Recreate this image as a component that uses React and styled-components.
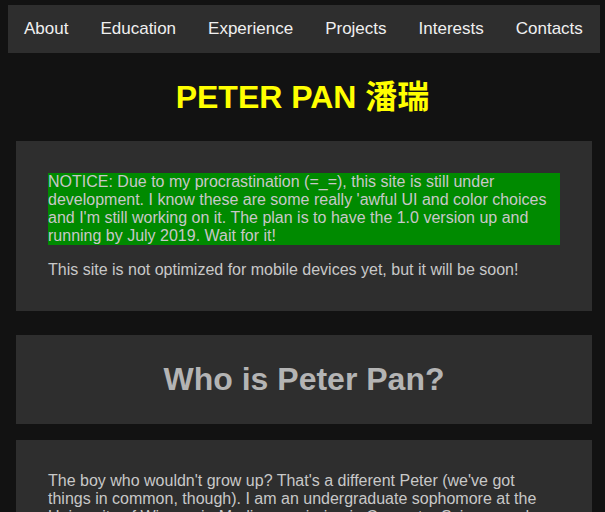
import React from "react";
import styled, { createGlobalStyle } from "styled-components";

const Global = createGlobalStyle`
  html, body {
    margin: 0;
    padding: 0;
    background: #121212;
  }
  body {
    font-family: "Liberation Sans", Arial, Helvetica, sans-serif;
    color: #c8c8c8;
  }
`;

const Page = styled.div`
  padding-top: 5px;
  min-height: 512px;
  box-sizing: border-box;
`;

const Nav = styled.nav`
  margin-left: 8px;
  width: 592px;
  height: 48px;
  background: #2e2e2e;
  display: flex;
  align-items: center;
`;

const NavItem = styled.a`
  padding: 0 16px;
  font-size: 17px;
  line-height: 48px;
  color: #f0f0f0;
  text-decoration: none;
  white-space: nowrap;
`;

const Title = styled.h1`
  margin: 26px 0 25px;
  font-size: 32px;
  line-height: 37px;
  font-weight: bold;
  text-align: center;
  color: #ffff00;
  font-family: "Liberation Sans", Arial, "Noto Sans CJK SC", sans-serif;
`;

const Main = styled.main`
  margin-left: 16px;
  width: 576px;
  display: flex;
  flex-direction: column;
`;

const Card = styled.section`
  background: #2e2e2e;
  padding: 16px 32px;
  margin-bottom: ${(p) => p.$gap || 16}px;
`;

const Para = styled.p`
  margin: 16px 0;
  font-size: 16px;
  line-height: 18px;
  color: #c8c8c8;
  background: ${(p) => (p.$notice ? "#008a00" : "transparent")};
`;

const Heading = styled.h2`
  margin: 10px 0;
  font-size: 32px;
  line-height: 37px;
  font-weight: bold;
  text-align: center;
  color: #b4b4b4;
`;

const links = ["About", "Education", "Experience", "Projects", "Interests", "Contacts"];

export default function App() {
  return (
    <>
      <Global />
      <Page>
        <Nav>
          {links.map((l) => (
            <NavItem key={l} href={`#${l.toLowerCase()}`}>
              {l}
            </NavItem>
          ))}
        </Nav>
        <Title>PETER PAN 潘瑞</Title>
        <Main>
          <Card $gap={24}>
            <Para $notice>
              NOTICE: Due to my procrastination (=_=), this site is still under development. I know
              these are some really 'awful UI and color choices and I'm still working on it. The
              plan is to have the 1.0 version up and running by July 2019. Wait for it!
            </Para>
            <Para>This site is not optimized for mobile devices yet, but it will be soon!</Para>
          </Card>
          <Card>
            <Heading>Who is Peter Pan?</Heading>
          </Card>
          <Card>
            <Para>
              The boy who wouldn't grow up? That's a different Peter (we've got things in common,
              though). I am an undergraduate sophomore at the University of Wisconsin-Madison
              majoring in Computer Science and Mathematics. I love building things and learning
              new stuff every day.
            </Para>
          </Card>
        </Main>
      </Page>
    </>
  );
}
